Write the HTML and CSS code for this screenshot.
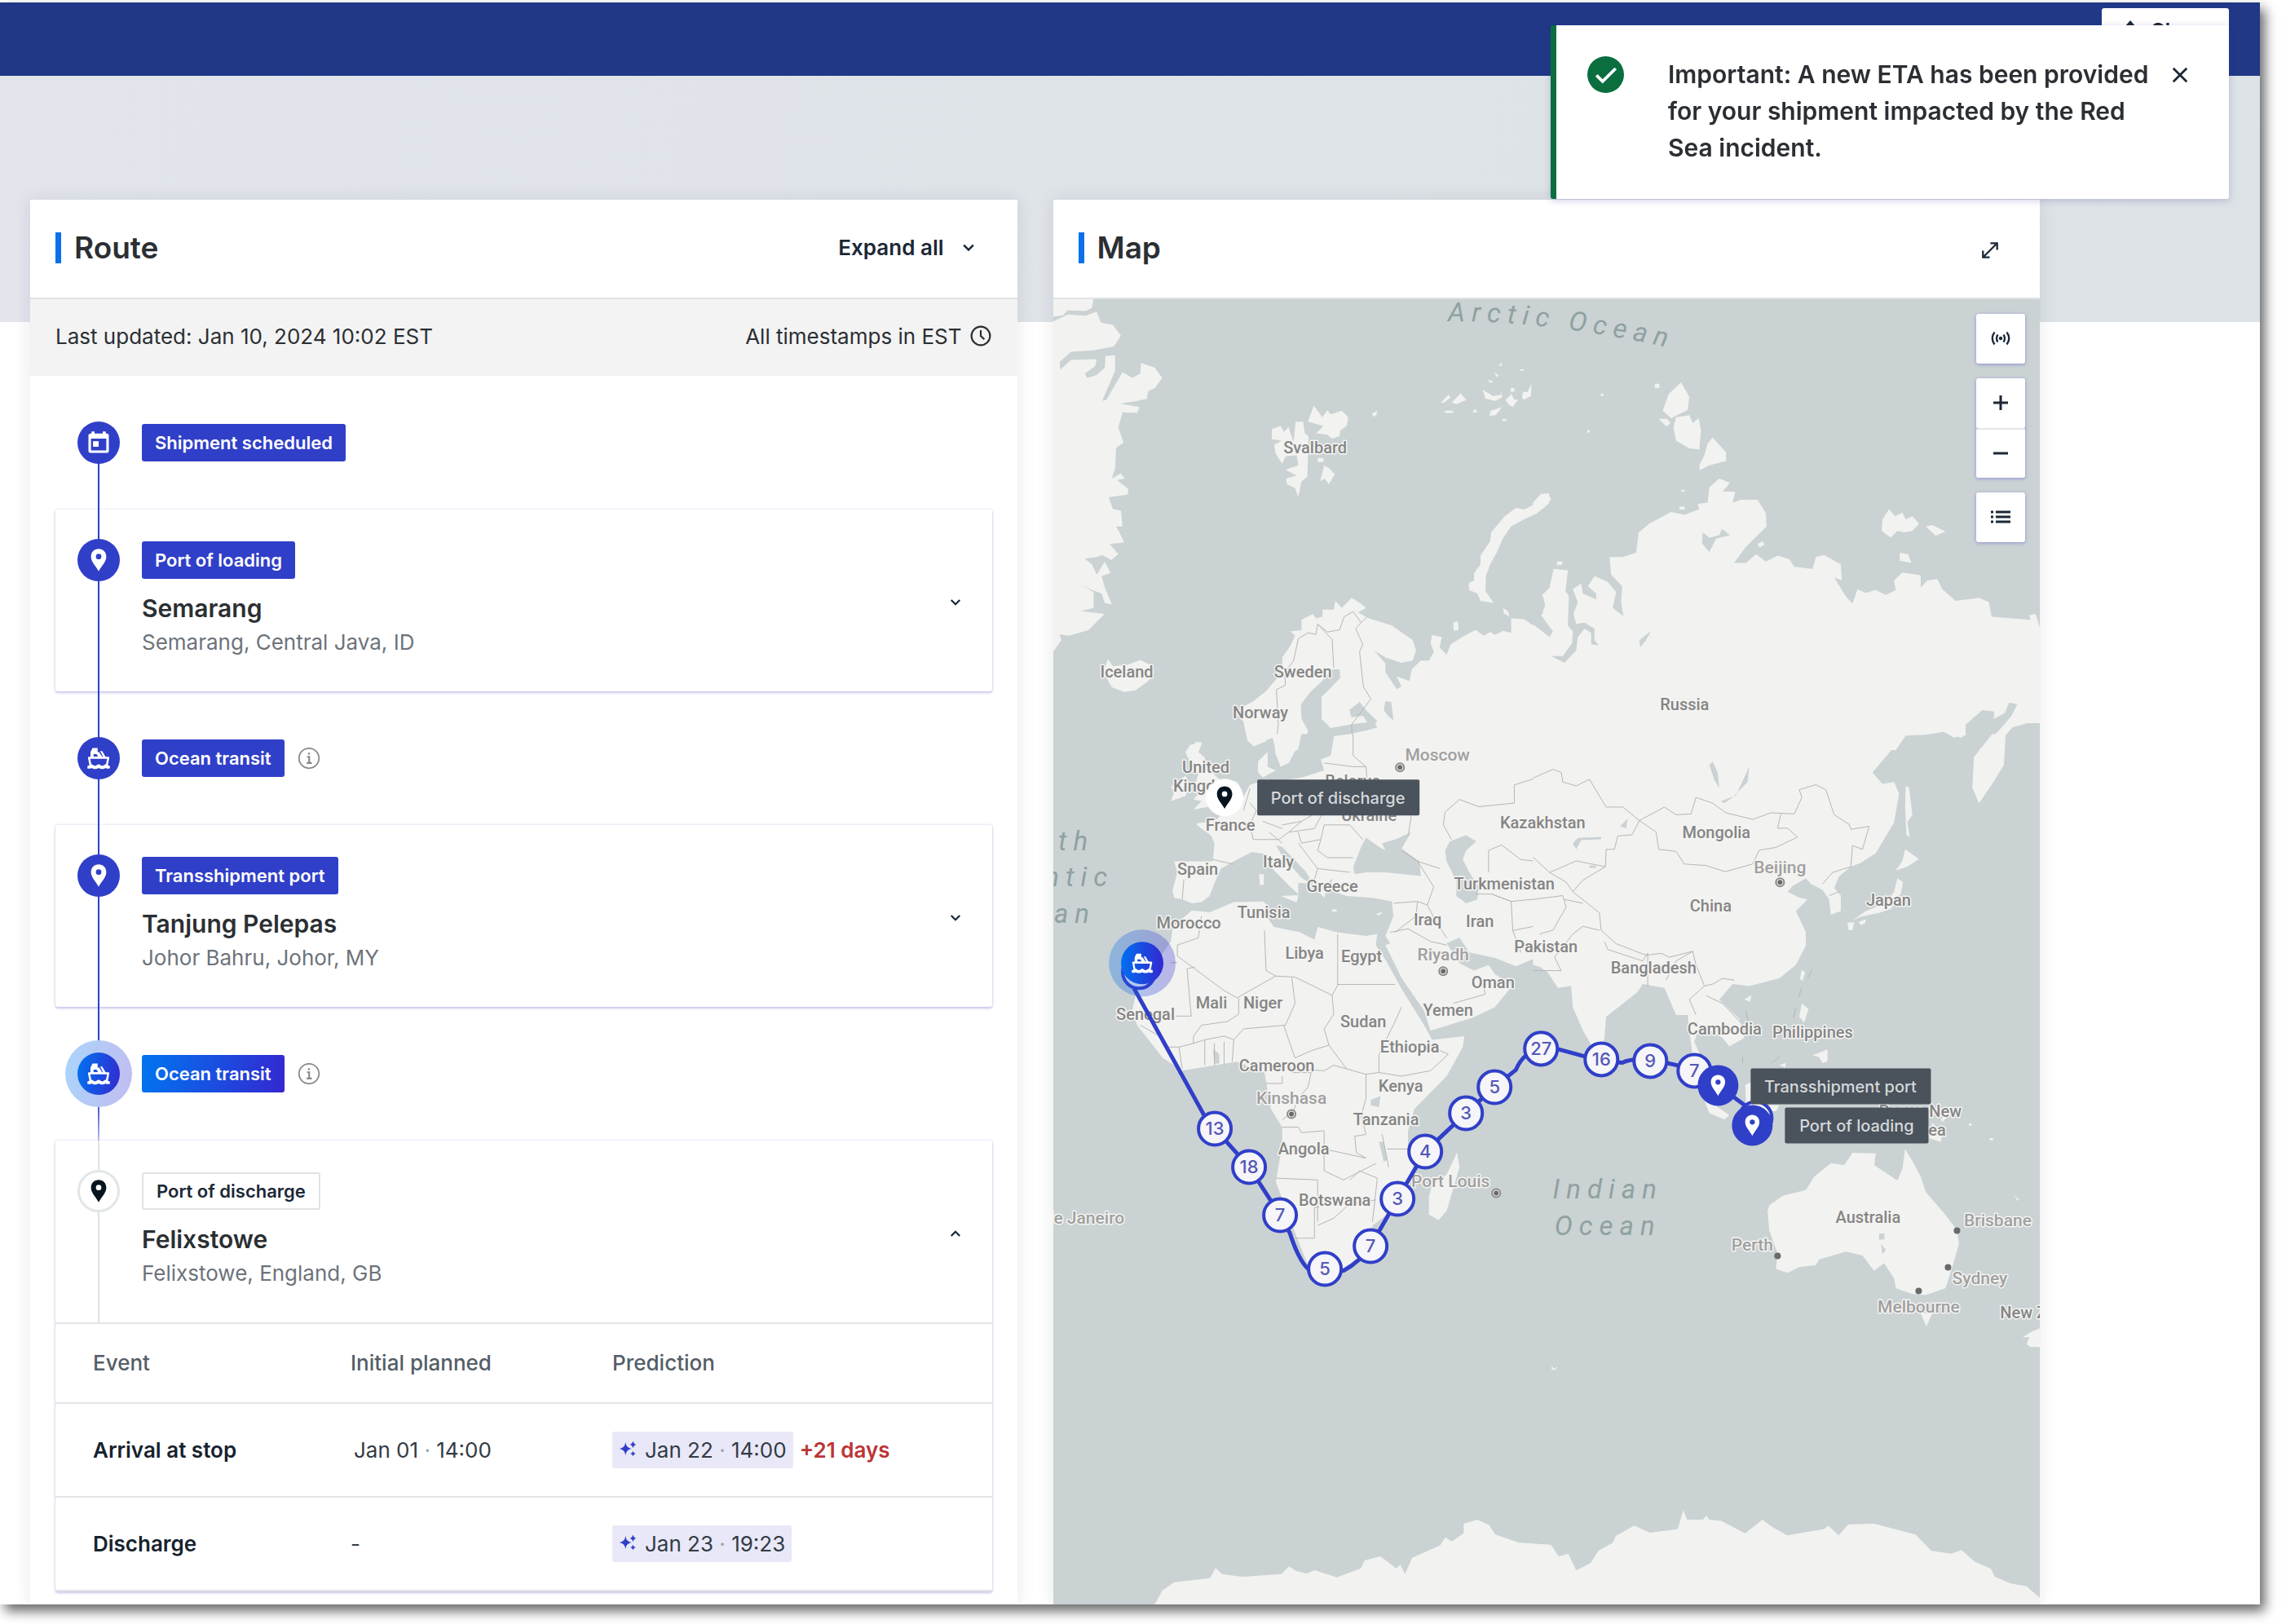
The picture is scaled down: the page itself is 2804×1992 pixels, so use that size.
FILE: index.html
```html
<!DOCTYPE html>
<html lang="en">
<head>
    <meta charset="UTF-8">
    <meta name="viewport" content="width=device-width, initial-scale=1.0">
    <title>Shipment tracking</title>
    <link rel="stylesheet" href="styles.css">
</head>
<body>
    <!-- Shared icons -->
    <svg class="sprite" aria-hidden="true">
        <defs>
            <linearGradient id="active-gradient" x1="0" y1="0" x2="1" y2="0">
                <stop offset="0" stop-color="#0070f0"/>
                <stop offset="1" stop-color="#3428d0"/>
            </linearGradient>
            <symbol id="icon-pin" viewBox="0 0 24 24">
                <path fill="currentColor" fill-rule="evenodd" d="M12 1C7.6 1 4.5 4.300 4.500 8.500c0 5.200 5 9.500 7.500 14.500 2.500-5 7.500-9.300 7.500-14.500C19.500 4.300 16.400 1 12 1zm0 4.800a2.700 2.700 0 1 1 0 5.400 2.700 2.700 0 0 1 0-5.400z"/>
            </symbol>
            <symbol id="icon-ship" viewBox="0 0 24 24">
                <path fill="none" stroke="currentColor" stroke-width="2" stroke-linejoin="round" d="M4 19 2.500 11.500h19L20 19"/>
                <path fill="currentColor" fill-rule="evenodd" d="M4 12V6l2-4h5v4h1.500l3.500 5.500zM7 8v2.500h4.500L10 8zM13.500 5h2l3.500 6h-2.500zM1 19.500c2 0 2.500-1.500 4-1.500s2 1.500 3.500 1.500S10.500 18 12 18s2 1.500 3.500 1.500S17.500 18 19 18s2 1.500 4 1.500V22c-2 .5-3 .3-4-.5-1 .8-2.500 1-3.500 1s-2.500-.2-3.500-1c-1 .8-2.500 1-3.500 1s-2.500-.2-3.500-1c-1 .8-2 1-4 .5z"/>
            </symbol>
            <symbol id="icon-calendar" viewBox="0 0 24 24">
                <path fill="currentColor" fill-rule="evenodd" d="M5 1h3v2h8V1h3v2h1a2 2 0 0 1 2 2v15a2 2 0 0 1-2 2H4a2 2 0 0 1-2-2V5a2 2 0 0 1 2-2h1zM4.500 8v11.500h15V8z"/>
                <path fill="currentColor" d="M6.500 10.500h5.500v5.500H6.500z"/>
            </symbol>
            <symbol id="icon-chevron" viewBox="0 0 24 24">
                <path fill="none" stroke="currentColor" stroke-width="3" d="m5 8 7 7 7-7"/>
            </symbol>
            <symbol id="icon-info" viewBox="0 0 24 24">
                <circle cx="12" cy="12" r="10.500" fill="none" stroke="currentColor" stroke-width="1.500"/>
                <path fill="none" stroke="currentColor" stroke-width="1.800" d="M10 10.500h2.200v6M9.500 17h5.500M11 7.200h2"/>
            </symbol>
            <symbol id="icon-sparkle" viewBox="0 0 24 24">
                <path fill="currentColor" d="M9 3c.8 5.500 2.500 7.500 8 9-5.500 1.500-7.200 3.500-8 9-.8-5.500-2.500-7.500-8-9 5.500-1.500 7.200-3.500 8-9zM19 2l1.500 3L23 6.500 20.500 8 19 11l-1.500-3L15 6.500 17.500 5zM19 15l1.200 2.400L22.500 18.600l-2.300 1.200L19 22.200l-1.200-2.400-2.300-1.200 2.300-1.200z"/>
            </symbol>
        </defs>
    </svg>

    <div class="app">
        <header class="top-bar">
            <button class="share" type="button">
                <svg class="icon-share" viewBox="0 0 24 24" aria-hidden="true"><path fill="currentColor" d="m12 0 7 8H5z"/><path fill="none" stroke="currentColor" stroke-width="3" d="M12 17V6M4 12v9h16v-9"/></svg>
                Share
            </button>
        </header>

        <main>
            <section class="panel route">
                <div class="panel-head">
                    <h2>Route</h2>
                    <button class="expand" type="button">Expand all <svg class="chevron"><use href="#icon-chevron"/></svg></button>
                </div>
                <div class="info-bar">
                    <span>Last updated: Jan 10, 2024 10:02 EST</span>
                    <span class="zone">All timestamps in EST
                        <svg class="clock" viewBox="0 0 24 24" aria-hidden="true"><circle cx="12" cy="12" r="10.500" fill="none" stroke="currentColor" stroke-width="2"/><path fill="none" stroke="currentColor" stroke-width="2" d="M12 5.500V12l4 4"/></svg>
                    </span>
                </div>

                <div class="timeline">
                    <div class="leg first">
                        <div class="rail"><span class="dot"><svg><use href="#icon-calendar"/></svg></span></div>
                        <div class="leg-body"><span class="tag">Shipment scheduled</span></div>
                    </div>

                    <article class="stop">
                        <div class="stop-head">
                            <div class="rail"><span class="dot"><svg><use href="#icon-pin"/></svg></span></div>
                            <div class="stop-body">
                                <span class="tag">Port of loading</span>
                                <h3>Semarang</h3>
                                <p>Semarang, Central Java, ID</p>
                            </div>
                            <button class="toggle" type="button" aria-label="Show Semarang"><svg class="chevron"><use href="#icon-chevron"/></svg></button>
                        </div>
                    </article>

                    <div class="leg">
                        <div class="rail"><span class="dot"><svg><use href="#icon-ship"/></svg></span></div>
                        <div class="leg-body"><span class="tag">Ocean transit</span><svg class="info"><use href="#icon-info"/></svg></div>
                    </div>

                    <article class="stop">
                        <div class="stop-head">
                            <div class="rail"><span class="dot"><svg><use href="#icon-pin"/></svg></span></div>
                            <div class="stop-body">
                                <span class="tag">Transshipment port</span>
                                <h3>Tanjung Pelepas</h3>
                                <p>Johor Bahru, Johor, MY</p>
                            </div>
                            <button class="toggle" type="button" aria-label="Show Tanjung Pelepas"><svg class="chevron"><use href="#icon-chevron"/></svg></button>
                        </div>
                    </article>

                    <div class="leg active">
                        <div class="rail"><span class="halo"><span class="dot"><svg><use href="#icon-ship"/></svg></span></span></div>
                        <div class="leg-body"><span class="tag">Ocean transit</span><svg class="info"><use href="#icon-info"/></svg></div>
                    </div>

                    <article class="stop upcoming">
                        <div class="stop-head">
                            <div class="rail"><span class="dot"><svg><use href="#icon-pin"/></svg></span></div>
                            <div class="stop-body">
                                <span class="tag">Port of discharge</span>
                                <h3>Felixstowe</h3>
                                <p>Felixstowe, England, GB</p>
                            </div>
                            <button class="toggle open" type="button" aria-label="Hide Felixstowe"><svg class="chevron"><use href="#icon-chevron"/></svg></button>
                        </div>
                        <table>
                            <thead>
                                <tr><th>Event</th><th>Initial planned</th><th>Prediction</th></tr>
                            </thead>
                            <tbody>
                                <tr>
                                    <th>Arrival at stop</th>
                                    <td><time>Jan 01 <i>·</i> 14:00</time></td>
                                    <td><span class="prediction"><svg><use href="#icon-sparkle"/></svg>Jan 22 <i>·</i> 14:00</span><strong class="late">+21 days</strong></td>
                                </tr>
                                <tr>
                                    <th>Discharge</th>
                                    <td>-</td>
                                    <td><span class="prediction"><svg><use href="#icon-sparkle"/></svg>Jan 23 <i>·</i> 19:23</span></td>
                                </tr>
                            </tbody>
                        </table>
                    </article>
                </div>
            </section>

            <section class="panel map-panel">
                <div class="panel-head">
                    <h2>Map</h2>
                    <button class="fullscreen" type="button" aria-label="Full screen"><svg viewBox="0 0 24 24"><path fill="none" stroke="currentColor" stroke-width="2.500" d="M3 21 21 3M12.500 2.500h9v9M2.500 12.500v9h9"/></svg></button>
                </div>
                <div class="map">
                    <svg class="world" viewBox="0 0 1210 1601" preserveAspectRatio="xMidYMin slice" role="img" aria-label="Shipment route">
                        <defs>
                            <path id="arctic-curve" d="M484 27Q622 26 800 70"/>
                        </defs>

                        <!-- North Atlantic and Scandinavia -->
                        <svg x="-12" y="-7" width="620" height="560" viewBox="0 0 1568 1568" preserveAspectRatio="none">
                            <g class="land">
                                <path d="M30 0 155 20 150 50 130 60 75 58 60 75 30 80ZM30 95 75 72 130 76 165 62 178 100 215 108 240 145 218 182 155 195 85 200 50 235 52 262 85 228 165 225 160 250 128 275 135 290 165 280 190 255 192 215 222 212 222 265 182 368 195 365 245 270 275 290 300 275 302 238 345 255 368 290 345 325 325 335 320 362 285 370 238 378 298 390 290 410 245 408 232 460 248 512 225 530 222 600 212 635 240 618 252 635 228 640 262 670 262 690 202 700 215 740 240 745 245 800 225 800 240 830 250 855 205 860 232 895 210 915 182 898 165 905 128 910 150 930 165 965 190 920 208 960 180 970 190 1010 212 1068 190 1062 180 1030 150 1018 118 1000 155 1025 155 1080 115 1090 190 1100 140 1155 80 1175 50 1170 55 1190 30 1230Z"/>
                                <path d="M708 465 735 455 745 475 760 458 775 510 782 440 805 440 810 480 822 490 818 630 800 645 790 700 780 668 755 655 752 635 785 625 750 605 790 590 785 555 750 560 740 585 720 550 715 520 738 505 708 500ZM838 385 865 425 880 400 890 415 925 402 945 425 940 455 920 470 918 490 895 498 880 485 845 480 868 455 820 440ZM858 645 870 590 885 600 903 620 885 655 872 635ZM850 565h18v14h-18z"/>
                                <path d="M1018 412l18-10-4 14-8 8zM1232 375l24-28 6 10-20 18zM1265 375l28-32 18 22-30 15zM1245 402h25v8h-25zM1362 330l32 22 24-4 0-15 4 24-22 12-30-8zM1378 295l18 8-12 4zM1398 270l14 12-8 4zM1433 365l18-20 8 18 12 2-16 25-12-8zM1484 360l2-22 15 0 12-28-2 42-20 12zM1382 420l5-18 35-12-20 28zM1330 408l8-12 8 12zM1448 325h12v12h-12zM1412 245l12-8-6 14zM1478 260h12v5h-12zM1422 432h14v6h-14z"/>
                                <path d="M1568 685 1545 690 1530 720 1490 742 1465 736 1430 765 1388 820 1385 850 1355 900 1355 930 1335 960 1335 985 1318 995 1320 1018 1345 1030 1355 1055 1395 1062 1370 1020 1372 970 1385 930 1405 890 1425 840 1450 800 1490 775 1530 755 1568 720ZM1270 1130l15-5 2 30-15 3zM1425 1080l15 10 5 20-18-12z"/>
                                <path d="M200 1255 215 1280 235 1278 260 1275 300 1258 330 1275 342 1300 325 1330 285 1362 250 1368 212 1352 185 1300Z"/>
                                <path d="M650 1552 632 1535 620 1470 600 1440 625 1415 650 1400 690 1365 740 1300 740 1250 765 1210 780 1175 765 1160 800 1155 800 1120 835 1100 845 1115 865 1110 865 1085 900 1085 905 1055 925 1080 955 1045 985 1065 1000 1080 975 1095 1010 1115 1080 1140 1145 1190 1155 1225 1145 1260 1110 1268 1060 1250 1025 1225 1060 1270 1060 1300 1095 1358 1110 1350 1095 1315 1135 1330 1142 1290 1170 1260 1195 1260 1210 1230 1200 1200 1205 1172 1235 1180 1228 1215 1250 1240 1262 1205 1305 1175 1340 1155 1365 1175 1385 1162 1400 1172 1425 1158 1450 1165 1450 1115 1490 1118 1550 1165 1568 1185V1568H720L710 1525ZM1568 1015 1545 1035 1560 1060 1548 1090 1568 1115ZM465 1568l5-28 20 0-8 28z"/>
                            </g>
                            <g class="sea">
                                <path d="M895 1290 918 1290 920 1320 885 1360 862 1385 862 1460 890 1492 960 1478 1025 1470 1035 1490 1000 1500 950 1512 900 1520 905 1568 805 1568 820 1500 800 1460 798 1410 830 1365 860 1335ZM948 1430 980 1402 1000 1430 1035 1468 1015 1490 990 1450 955 1455ZM1060 1400 1078 1402 1085 1465 1068 1450 1055 1430ZM1100 1520 1125 1545 1125 1568 1105 1568ZM728 1525 755 1510 750 1530 730 1550Z"/>
                            </g>
                            <path class="border" d="M718 1568 728 1480 722 1360 750 1345 748 1300 775 1262 790 1185 820 1165 845 1170 850 1135 880 1162 918 1155 932 1110 960 1092 985 1130 1005 1108M850 1135 895 1188 900 1285M985 1130 968 1150 990 1205 980 1230 992 1350 1015 1392 955 1480 960 1560"/>
                        </svg>

                        <!-- Siberia -->
                        <svg x="588" y="-7" width="640" height="560" viewBox="0 0 1568 1568" preserveAspectRatio="none">
                            <g class="land">
                                <path d="M0 718 25 688 45 688 55 705 35 735 0 760ZM445 305 470 355 465 400 415 428 390 402 408 345ZM378 430l25 0 10 15-12 12zM422 460 430 425 470 418 480 445 498 428 505 470 500 535 470 532 430 505ZM540 495 580 545 580 575 530 590 502 607 500 590 515 555 525 515ZM366 310h14v14h-14zM204 344h8v8h-8zM163 469h8v8h-8zM440 732h16v10h-16zM446 674h10v6h-10zM72 920h16v12h-16z"/>
                                <path d="M0 1135 50 1180 60 1160 25 1105 38 1080 30 1035 50 1010 62 945 105 950 98 1020 108 1040 105 1140 120 1160 118 1200 90 1245 55 1245 95 1268 130 1225 135 1180 155 1150 175 1165 175 1205 198 1208 185 1190 185 1150 155 1130 130 1135 122 1100 135 1060 120 1015 145 995 150 1030 190 1050 190 1030 165 1005 185 970 225 990 250 1025 240 1080 272 1108 265 1060 268 1005 235 965 230 905 270 905 310 890 318 820 350 790 415 750 455 760 500 740 495 722 525 718 530 665 560 635 592 650 570 680 608 680 600 718 625 708 675 708 700 755 702 800 640 870 585 955 605 925 640 925 670 895 700 920 735 900 770 912 785 938 840 945 850 905 875 898 925 930 928 985 905 975 940 1040 960 1065 975 1015 1000 1028 1030 1018 1060 1035 1090 1018 1085 985 1110 958 1165 968 1165 1010 1185 985 1215 980 1230 1015 1270 1055 1340 1045 1370 1060 1378 1110 1440 1115 1495 1120 1490 1105 1510 1100 1525 1155 1568 1160V1475H1485L1440 1490 1410 1530 1405 1568H1340L1400 1500 1438 1450 1455 1410 1430 1405 1418 1440 1385 1460 1385 1435 1350 1430 1300 1480 1300 1515 1265 1525 1235 1505 1180 1515 1120 1518 1090 1568H0Z"/>
                                <path d="M1070 740 1088 765 1110 752 1120 775 1140 765 1160 790 1140 815 1115 820 1095 815 1075 838 1048 815 1050 775ZM1180 800l20-5 40 22-30 15zM1102 890l25 5 10 30-35-8zM675 860l15-10 6 12-15 10z"/>
                            </g>
                            <g class="sea">
                                <path d="M510 820 530 838 560 830 568 808 592 830 550 842 530 888 508 858ZM320 1190 355 1158 340 1190 322 1215Z"/>
                            </g>
                        </svg>

                        <!-- Europe, Africa and the Middle East -->
                        <svg x="-12" y="533" width="620" height="700" viewBox="0 0 1568 1568" preserveAspectRatio="none">
                            <g class="land">
                                <path d="M455 30 492 25 480 50 500 65 500 90 540 120 575 150 570 185 545 195 465 208 490 185 465 180 485 160 470 140 480 110 455 80 440 50ZM395 145 440 115 455 140 440 170 395 185 405 160ZM630 0H690L690 20 650 35ZM715 0H795L785 40 760 80 735 90 718 50ZM665 75 695 50 695 90 720 100 680 120 665 105Z"/>
                                <path d="M475 245 530 240 560 215 600 205 640 140 690 125 720 130 800 120 870 100 860 70 890 60 900 10 960 0H1568V640L1540 610 1465 638 1400 615 1320 600 1290 560 1250 575 1290 630 1335 650 1380 635 1400 660 1455 690 1400 750 1330 780 1200 815 1180 760 1110 670 1060 580 1075 575 1060 555 1085 500 1080 460 1020 450 940 445 890 430 895 395 1000 380 1060 380 1170 390 1165 350 1110 315 1140 270 1090 290 1050 300 1060 320 1040 310 1000 285 985 310 960 365 965 385 920 395 890 400 870 450 840 420 815 380 740 310 720 305 740 335 800 395 825 410 790 410 790 440 765 420 715 375 690 330 645 325 600 345 550 370 530 410 515 445 490 462 460 465 432 455 405 450 400 430 415 380 405 350 525 350 530 300 520 280 475 250Z"/>
                                <path d="M735 445 790 443 785 463ZM668 385H683V415H671ZM895 482h14v6h-14zM1030 495l24-8-14 12z"/>
                                <path d="M460 485 515 490 590 462 680 460 695 470 690 500 715 530 795 545 840 565 850 530 910 545 1000 555 1035 550 1030 580 1060 620 1110 700 1180 800 1205 840 1305 830 1300 860 1250 940 1150 1030 1130 1090 1130 1140 1150 1200 1130 1250 1080 1310 1020 1350 1000 1420 930 1475 850 1480 820 1460 780 1370 720 1230 740 1130 740 1080 705 1030 685 930 600 900 500 915 430 925 370 890 290 800 275 760 290 700 340 640 395 570 400 530 440 500ZM1282 1150 1290 1190 1250 1310 1225 1335 1195 1320 1195 1270 1205 1240 1250 1210Z"/>
                            </g>
                            <g class="sea">
                                <path d="M1245 320 1260 295 1310 278 1342 295 1310 320 1300 345 1320 380 1350 420 1345 455 1310 465 1280 445 1280 405 1250 350ZM1015 1005 1045 995 1040 1025 1015 1020ZM1040 1120 1055 1120 1065 1170 1055 1175ZM525 865 545 880 545 905 530 905ZM800 0H895L880 40 830 100 790 110 780 80ZM812 45h10v10h-10z"/>
                            </g>
                            <path class="border" d="M685 540 690 650 720 665 780 668 895 718 912 690V550M912 688H1090M720 665 600 725 560 705 415 610V580L480 560 490 500M395 628H415M445 645 458 775H410M605 725V770L570 790 490 800 465 830 465 850M445 645 470 640M770 670 780 740 750 800 620 810 590 840 585 900M895 718 900 770 870 810 885 855 830 870 780 890 760 840 745 800M885 855 940 920 1000 935 1040 930 1040 880 1090 790 1110 750M1040 930 1110 940 1200 925 1255 880 1180 850M1000 935 1000 1000 985 1050 1000 1100 965 1105 970 1150 1000 1165 870 1140M740 1080H790L800 1095 870 1090V1200L930 1225 1030 1180M720 1220 850 1225V1340M780 1385H840V1300L855 1300M850 1350 900 1330 950 1290 1030 1280M950 1225 980 1200 1035 1220 1020 1340M690 960H740V940M770 930 830 930 820 970 790 1000 775 1035 740 1060M780 920 870 925 900 910 940 920M500 840V910M530 850V910M560 845V910M465 850 500 840 560 830 590 840M300 800 360 830 380 860 420 860 430 920M420 860 465 850M1050 1100 1070 1190M1065 1140H1130"/>
                            <path class="border" d="M1085 465 1160 460 1190 470 1220 520 1250 560M1075 545 1130 535 1200 570 1250 580M1160 460 1155 500 1090 545M1270 740 1370 715 1360 680M1190 470 1210 420 1160 350 1230 370M1390 440 1450 460 1455 540 1480 600M1450 460 1568 450M1380 380V320L1420 305 1480 345 1530 350 1568 380M1340 440 1390 440 1450 460M1568 110 1460 140 1460 190 1350 200 1290 180 1245 215 1240 250 1265 290M1455 540 1568 520"/>
                            <path class="border" d="M960 0V60L1000 90 1005 150 870 150M870 80 960 90 1000 90M860 150 860 210 800 240 760 270 730 290 650 290 640 250 660 210M760 270 840 260 870 210 870 150M870 250 950 250 990 290M860 290 850 320 880 340 960 340M790 300 850 370 840 400M790 270 800 300 860 290 870 250M740 250 800 240M680 240 740 260M850 370 950 380M1005 150 1120 170 1140 230 1130 280M525 345 590 358M435 400 430 455M660 210 640 190M1160 350 1110 320M640 150 620 210M700 270 740 300"/>
                        </svg>

                        <!-- East Asia and Australia -->
                        <svg x="588" y="533" width="640" height="740" viewBox="0 0 1568 1568" preserveAspectRatio="none">
                            <g class="land">
                                <path d="M0 0H1115L1060 60 1020 100 1050 130 1085 125 1100 155 1085 230 1030 310 985 335 955 345 920 370 905 400 925 420 925 460 895 470 890 430 870 405 835 390 820 375 780 395 765 410 800 425 825 430 790 460 820 515 820 550 790 600 740 635 650 655 600 650 560 690 620 740 635 790 590 812 570 790 530 770 500 760 485 800 510 850 535 900 520 900 480 840 470 770 465 730 430 730 395 660 330 650 315 670 220 735 215 790 205 820 180 815 150 770 120 710 115 655 75 660 45 620 20 605 0 600Z"/>
                                <path d="M1380 0H1420L1415 80 1380 130 1340 180 1320 140 1325 60ZM1265 0h40l-20 10zM1120 135 1130 140 1140 210 1125 230 1132 268 1122 262 1118 190ZM1118 300 1160 325 1125 345 1090 355 1110 330ZM1095 375 1112 385 1105 415 1075 455 1040 465 985 475 960 485 1000 460 1060 440 1085 410ZM945 490l20 0-5 20-12 0zM980 488l20-6-2 10-14 4zM808 612l10 8-8 22-8-6zM635 690l22-12-5 18zM808 700 828 715 815 750 800 735ZM840 835 885 820 885 850 870 855 860 840ZM740 860l20-5-2 12zM500 920 540 960 590 990 575 1002 530 985ZM638 912 655 905V960H640ZM700 965h40l-10 15h-25zM1200 1010 1230 1040 1225 1060 1190 1050ZM1225 1000l25-10-20 18zM1310 1012h8v6h-8zM1372 1050h10v6h-10zM1445 1198l15 12-4 3zM1465 1212l8 4z"/>
                                <path d="M710 1225 750 1200 820 1185 845 1150 895 1115 935 1120 960 1088 1030 1090 1025 1120 1095 1160 1110 1130 1118 1078 1140 1110 1165 1150 1180 1190 1235 1245 1275 1290 1280 1325 1265 1370 1240 1440 1180 1458 1140 1455 1090 1440 1085 1415 1055 1375 1025 1395 990 1355 940 1345 860 1365 850 1380 800 1385 765 1400 730 1390 735 1350 710 1290 705 1240ZM1165 1505H1200L1182 1540ZM1470 1568 1500 1552 1568 1530V1568Z"/>
                            </g>
                            <g class="sea">
                                <path d="M565 175 610 160 650 85 645 125 600 165 575 180ZM120 285 135 270 205 268 205 274 145 276 130 300ZM515 95 540 72 555 100 560 140 545 120 530 80ZM262 240 285 220 280 245ZM1040 1298h16v16h-16zM1046 1325 1060 1340 1050 1352ZM170 342h20v6h-20z"/>
                            </g>
                            <path class="border" d="M0 115 60 92 85 100 90 125 130 135 170 118 220 190 270 190 320 225 395 190 430 210 475 208 490 165 540 180 580 205 660 222 715 205 785 208 808 165 800 145 850 132 880 145 905 210 950 235 955 248 1010 240 990 300 960 290 955 345 900 360 870 390M320 225 370 255 378 300 430 305 455 338 520 342 578 358 660 338 680 302 730 295 795 268 765 245 735 245 745 208M320 225 298 262 255 265 245 300 220 300 218 345 150 380 120 410 200 465 205 510 250 545 340 575 385 570 410 580 480 565 490 600 515 655 540 650 570 635 605 640M0 320 50 360 130 330 218 345M0 430 90 420 100 450 60 510 20 520M50 360 100 385 120 410M215 540 225 560 330 590 345 570M345 570V655M400 640 430 590 480 565M515 655 470 690 490 730M520 680 570 700 625 750M0 615 85 615 65 580 120 520 150 500 200 510M95 430 150 440M890 420 920 410"/>
                            <path class="border dashed" d="M840 612 805 665 780 745M740 838 700 870M640 720 655 790M630 840V855"/>
                        </svg>

                        <!-- Antarctica -->
                        <svg x="-12" y="1213" width="1524" height="412" viewBox="0 0 1568 1236" preserveAspectRatio="none">
                            <path class="land" d="M140 1163 150 1110 165 1080 210 1065 217 1028 225 1050 250 1060 300 1050 310 1022 318 1038 332 1048 342 1036 370 1062 400 1030 405 1000 425 985 445 1030 450 1015 456 1050 465 990 500 945 507 915 515 930 530 900 530 865 547 850 562 870 570 905 600 935 640 942 650 985 662 975 672 1037 690 1010 700 965 718 935 722 910 745 872 765 898 800 885 807 815 812 850 832 850 836 835 840 850 855 855 885 900 907 850 918 875 938 908 985 885 990 872 1003 908 1015 868 1048 865 1100 905 1120 965 1145 975 1158 962 1175 1005 1195 1030 1200 1060 1220 1085 1240 1095 1258 1140 1300 1163V1236H140ZM1240 205Q1245 160 1258 145L1300 120V215H1245ZM641 285l3 10 4-8-2 12-5 0z"/>
                        </svg>

                        <g class="ocean-names">
                            <text><textPath href="#arctic-curve">Arctic Ocean</textPath></text>
                            <text x="680" y="1103" text-anchor="middle">Indian</text>
                            <text x="680" y="1148" text-anchor="middle">Ocean</text>
                            <text x="50" y="676" text-anchor="end">North</text>
                            <text x="74" y="720" text-anchor="end">Atlantic</text>
                            <text x="52" y="765" text-anchor="end">Ocean</text>
                        </g>

                        <g class="countries">
                            <text x="321" y="189">Svalbard</text>
                            <text x="90" y="464">Iceland</text>
                            <text x="306" y="464">Sweden</text>
                            <text x="254" y="514">Norway</text>
                            <text x="774" y="504">Russia</text>
                            <text x="187" y="581">United</text>
                            <text x="187" y="604">Kingdom</text>
                            <text x="217" y="652">France</text>
                            <text x="177" y="706">Spain</text>
                            <text x="276" y="697">Italy</text>
                            <text x="342" y="727">Greece</text>
                            <text x="258" y="759">Tunisia</text>
                            <text x="166" y="772">Morocco</text>
                            <text x="459" y="768">Iraq</text>
                            <text x="523" y="770">Iran</text>
                            <text x="553" y="724">Turkmenistan</text>
                            <text x="600" y="649">Kazakhstan</text>
                            <text x="367" y="598">Belarus</text>
                            <text x="387" y="640">Ukraine</text>
                            <text x="813" y="661">Mongolia</text>
                            <text x="806" y="751">China</text>
                            <text x="1024" y="744">Japan</text>
                            <text x="604" y="801">Pakistan</text>
                            <text x="736" y="827">Bangladesh</text>
                            <text x="539" y="845">Oman</text>
                            <text x="484" y="879">Yemen</text>
                            <text x="378" y="813">Egypt</text>
                            <text x="308" y="809">Libya</text>
                            <text x="194" y="870">Mali</text>
                            <text x="257" y="870">Niger</text>
                            <text x="380" y="893">Sudan</text>
                            <text x="113" y="884">Senegal</text>
                            <text x="437" y="924">Ethiopia</text>
                            <text x="274" y="947">Cameroon</text>
                            <text x="426" y="972">Kenya</text>
                            <text x="408" y="1013">Tanzania</text>
                            <text x="307" y="1049">Angola</text>
                            <text x="345" y="1112">Botswana</text>
                            <text x="823" y="902">Cambodia</text>
                            <text x="931" y="906">Philippines</text>
                            <text x="1063" y="1003">Papua New</text>
                            <text x="1063" y="1026">Guinea</text>
                            <text x="999" y="1133">Australia</text>
                            <text x="1219" y="1249">New Zealand</text>
                        </g>
                        <g class="cities">
                            <text x="471" y="566">Moscow</text>
                            <text x="891" y="704">Beijing</text>
                            <text x="478" y="811">Riyadh</text>
                            <text x="292" y="987">Kinshasa</text>
                            <text x="487" y="1089">Port Louis</text>
                            <text x="20" y="1134">Rio de Janeiro</text>
                            <text x="1158" y="1137">Brisbane</text>
                            <text x="857" y="1167">Perth</text>
                            <text x="1136" y="1208">Sydney</text>
                            <text x="1061" y="1242">Melbourne</text>
                        </g>
                        <g class="capital">
                            <circle cx="425" cy="574" r="5"/>
                            <circle cx="891" cy="715" r="5"/>
                            <circle cx="478" cy="824" r="5"/>
                            <circle cx="292" cy="999" r="5"/>
                            <circle cx="543" cy="1096" r="5"/>
                        </g>
                        <g class="capital-core">
                            <circle cx="425" cy="574" r="3"/>
                            <circle cx="891" cy="715" r="3"/>
                            <circle cx="478" cy="824" r="3"/>
                            <circle cx="292" cy="999" r="3"/>
                            <circle cx="543" cy="1096" r="3"/>
                            <circle cx="1108" cy="1142" r="4"/>
                            <circle cx="888" cy="1173" r="4"/>
                            <circle cx="1097" cy="1187" r="4"/>
                            <circle cx="1061" cy="1216" r="4"/>
                        </g>

                        <!-- Vessel track -->
                        <path class="track" d="M99 845 184 999 198 1017 240 1064 278 1123 290 1145Q302 1182 315 1191L333 1194 356 1191Q376 1180 389 1161L422 1103 456 1045 506 998 541 966 567 945Q577 922 598 919L617 919 672 934 698 936Q706 931 732 932L786 944 815 964 861 998"/>
                        <g class="clusters">
                            <circle cx="105" cy="825" r="20"/>
                            <circle cx="861" cy="1004" r="20"/>
                            <circle cx="198" cy="1017" r="20"/><text x="198" y="1025">13</text>
                            <circle cx="240" cy="1064" r="20"/><text x="240" y="1072">18</text>
                            <circle cx="278" cy="1123" r="20"/><text x="278" y="1131">7</text>
                            <circle cx="333" cy="1189" r="20"/><text x="333" y="1197">5</text>
                            <circle cx="389" cy="1161" r="20"/><text x="389" y="1169">7</text>
                            <circle cx="422" cy="1103" r="20"/><text x="422" y="1111">3</text>
                            <circle cx="456" cy="1045" r="20"/><text x="456" y="1053">4</text>
                            <circle cx="506" cy="998" r="20"/><text x="506" y="1006">3</text>
                            <circle cx="541" cy="966" r="20"/><text x="541" y="974">5</text>
                            <circle cx="598" cy="919" r="20"/><text x="598" y="927">27</text>
                            <circle cx="672" cy="932" r="20"/><text x="672" y="940">16</text>
                            <circle cx="732" cy="934" r="20"/><text x="732" y="942">9</text>
                            <circle cx="786" cy="946" r="20"/><text x="786" y="954">7</text>
                        </g>

                        <!-- Markers -->
                        <g class="marker">
                            <circle cx="109" cy="814" r="41" fill="url(#active-gradient)" opacity="0.3"/>
                            <circle cx="109" cy="814" r="26" fill="url(#active-gradient)"/>
                            <use href="#icon-ship" x="95" y="800" width="28" height="28"/>
                            <circle cx="815" cy="964" r="25" fill="#303fc8"/>
                            <use href="#icon-pin" x="801" y="950" width="28" height="28"/>
                            <circle cx="857" cy="1013" r="25" fill="#303fc8"/>
                            <use href="#icon-pin" x="843" y="999" width="28" height="28"/>
                        </g>
                        <g class="marker dark">
                            <circle cx="210" cy="611" r="23" fill="#fff"/>
                            <use href="#icon-pin" x="195" y="596" width="30" height="30"/>
                        </g>
                        <g class="marker-label">
                            <rect x="250" y="589" width="199" height="44" rx="2"/>
                            <text x="349" y="619">Port of discharge</text>
                            <rect x="855" y="943" width="221" height="44" rx="2"/>
                            <text x="965" y="973">Transshipment port</text>
                            <rect x="897" y="991" width="176" height="44" rx="2"/>
                            <text x="985" y="1021">Port of loading</text>
                        </g>
                    </svg>

                    <div class="map-tools">
                        <button type="button" aria-label="Live position"><svg viewBox="0 0 24 24"><circle cx="12" cy="12" r="2.200" fill="currentColor"/><path fill="none" stroke="currentColor" stroke-width="2.300" d="M8.500 7.500q-3 4.500 0 9M15.500 7.500q3 4.500 0 9M4.500 4.500q-5.500 7.500 0 15M19.500 4.500q5.500 7.500 0 15"/></svg></button>
                        <div class="zoom">
                            <button type="button" aria-label="Zoom in"><svg viewBox="0 0 24 24"><path fill="none" stroke="currentColor" stroke-width="3" d="M12 3v18M3 12h18"/></svg></button>
                            <button type="button" aria-label="Zoom out"><svg viewBox="0 0 24 24"><path fill="none" stroke="currentColor" stroke-width="3" d="M3 12h18"/></svg></button>
                        </div>
                        <button type="button" aria-label="Legend"><svg viewBox="0 0 24 24"><path fill="none" stroke="currentColor" stroke-width="3" d="M6 6h18M6 12h18M6 18h18M0 6h3M0 12h3M0 18h3"/></svg></button>
                    </div>
                </div>
            </section>
        </main>
    </div>

    <div class="toast" role="status">
        <svg class="check" viewBox="0 0 24 24" aria-hidden="true"><circle cx="12" cy="12" r="12" fill="#0a6e3f"/><path fill="none" stroke="#fff" stroke-width="2" d="m6 12.500 4 4L18.500 8"/></svg>
        <p>Important: A new ETA has been provided for your shipment impacted by the Red Sea incident.</p>
        <button type="button" aria-label="Close"><svg viewBox="0 0 24 24"><path fill="none" stroke="currentColor" stroke-width="3" d="m3 3 18 18M21 3 3 21"/></svg></button>
    </div>
</body>
</html>
```
FILE: styles.css
```css
* {
    box-sizing: border-box;
}

body {
    margin: 0;
    height: 100vh;
    padding: 3px 32px 24px 0;
    overflow: hidden;
    background-color: #fff;
    font-family: Inter, "Liberation Sans", sans-serif;
    font-size: 26px;
    color: #2b2f33;
}

h2, h3, p {
    margin: 0;
}

button {
    padding: 0;
    border: 0;
    background: none;
    font: inherit;
    color: #1b2836;
    cursor: pointer;
}

.sprite {
    position: absolute;
    width: 0;
    height: 0;
}

.app {
    display: flex;
    flex-direction: column;
    height: 100%;
    background-color: #fff;
    box-shadow: 6px 8px 14px rgba(0, 0, 0, 0.6);
}

/* Top bar */
.top-bar {
    display: flex;
    justify-content: flex-end;
    flex: none;
    height: 90px;
    padding: 7px 38px 0 0;
    background-color: #203885;
}

.share {
    display: flex;
    align-items: center;
    justify-content: center;
    gap: 14px;
    width: 156px;
    height: 54px;
    border-radius: 3px;
    background-color: #fff;
    font-weight: 600;
}

.icon-share {
    width: 24px;
    height: 24px;
}

/* Main area */
main {
    display: grid;
    grid-template-columns: 1fr 1fr;
    gap: 44px;
    flex: 1;
    min-height: 0;
    padding: 152px 270px 0 37px;
    overflow: hidden;
    background: linear-gradient(100deg, #e2e5ec, #dce2e5) top / 100% 302px no-repeat;
}

.panel {
    display: flex;
    flex-direction: column;
    min-height: 0;
    background-color: #fff;
    box-shadow: 0 0 20px rgba(30, 30, 60, 0.1);
}

.panel-head {
    display: flex;
    align-items: center;
    justify-content: space-between;
    flex: none;
    height: 122px;
    padding: 0 50px 3px 31px;
    border-bottom: 2px solid #dfe3e3;
}

.panel-head h2 {
    padding-left: 16px;
    border-left: 7px solid #0a70eb;
    font-size: 37px;
    line-height: 38px;
    font-weight: 600;
}

.chevron {
    width: 20px;
    height: 20px;
}

.expand {
    display: flex;
    align-items: center;
    gap: 20px;
    font-weight: 600;
}

.info-bar {
    display: flex;
    align-items: center;
    justify-content: space-between;
    flex: none;
    height: 94px;
    padding: 0 32px 4px 31px;
    background-color: #f3f3f3;
}

.zone {
    display: flex;
    align-items: center;
    gap: 10px;
}

.clock {
    width: 26px;
    height: 26px;
}

/* Timeline */
.timeline {
    flex: 1;
    min-height: 0;
    padding: 0 31px;
}

.rail {
    display: flex;
    justify-content: center;
    background: linear-gradient(#303fc8, #303fc8) center / 2px 100% no-repeat;
}

.dot {
    display: flex;
    align-items: center;
    justify-content: center;
    width: 52px;
    height: 52px;
    border-radius: 50%;
    background-color: #303fc8;
    color: #fff;
}

.dot svg {
    width: 30px;
    height: 30px;
}

.leg {
    display: grid;
    grid-template-columns: 106px 1fr;
    height: 164px;
}

.leg .rail,
.leg-body {
    display: flex;
    align-items: center;
}

.leg-body {
    gap: 16px;
}

.leg.first .rail {
    background-size: 2px 50%;
    background-position: bottom;
}

.tag {
    display: inline-block;
    padding: 0 16px;
    border-radius: 3px;
    background-color: #303fc8;
    color: #fff;
    font-size: 22px;
    line-height: 46px;
    font-weight: 600;
}

.info {
    width: 28px;
    height: 28px;
    color: #85898c;
}

.leg.active .rail {
    background-image: linear-gradient(#303fc8 70%, #b9bfe8);
}

.leg.active .tag,
.leg.active .dot {
    background: linear-gradient(100deg, #0075f0, #3428d0);
}

.halo {
    padding: 15px;
    border-radius: 50%;
    background: linear-gradient(100deg, #aad5fa, #c2bcf1);
}

.stop {
    border-radius: 3px;
    box-shadow: 0 0 3px #d0cfea, 0 2px 3px #c9c6ea;
}

.stop-head {
    display: grid;
    grid-template-columns: 106px 1fr 90px;
    height: 223px;
}

.stop .rail {
    padding-top: 36px;
}

.stop-body {
    padding-top: 39px;
}

.stop h3 {
    padding-top: 14px;
    font-size: 30px;
    line-height: 44px;
    font-weight: 600;
}

.stop p {
    line-height: 40px;
    color: #6c737b;
}

.toggle {
    padding-top: 3px;
}

.toggle .chevron {
    width: 18px;
    height: 18px;
}

.toggle.open .chevron {
    transform: rotate(180deg);
}

.upcoming .rail {
    background-image: linear-gradient(#dfe3e3, #dfe3e3);
}

.upcoming .dot {
    border: 3px solid #e2e6e6;
    background-color: #fff;
    color: #06141f;
}

.upcoming .tag {
    border: 2px solid #dfe3e3;
    background-color: #fff;
    color: #1b2836;
    line-height: 42px;
}

/* Events table */
table {
    width: 100%;
    margin-bottom: 60px;
    border-collapse: collapse;
    table-layout: fixed;
}

th, td {
    height: 115px;
    padding: 0;
    border-top: 2px solid #e2e5e8;
    text-align: left;
    font-weight: 600;
    color: #16222e;
}

tbody tr:last-child {
    border-bottom: 2px solid #e2e5e8;
}

thead th {
    height: 98px;
    padding-bottom: 2px;
    font-weight: 500;
    color: #555d66;
}

th:first-child {
    width: 362px;
    padding-left: 46px;
}

th:nth-child(2) {
    width: 321px;
}

td {
    font-weight: 400;
    color: #333b44;
}

time {
    padding: 0 4px;
}

td i {
    font-style: normal;
    color: #9aa0a8;
}

.prediction {
    display: inline-block;
    padding: 0 8px;
    border-radius: 3px;
    background-color: #e8e8f8;
    line-height: 45px;
}

.prediction svg {
    width: 22px;
    height: 22px;
    margin-right: 10px;
    color: #303fc8;
}

.late {
    padding-left: 8px;
    font-weight: 600;
    color: #bb3535;
}

/* Map */
.fullscreen,
.fullscreen svg {
    width: 22px;
    height: 22px;
}

.map {
    position: relative;
    flex: 1;
    min-height: 0;
    overflow: hidden;
    background-color: #cad2d3;
}

.world {
    display: block;
    width: 100%;
    height: 100%;
    font-family: Roboto, "Liberation Sans", sans-serif;
    font-size: 20px;
    font-weight: 500;
}

.land {
    fill: #f2f2f0;
}

.sea {
    fill: #cad2d3;
}

.border {
    fill: none;
    stroke: #b6b6b4;
    stroke-width: 1px;
    vector-effect: non-scaling-stroke;
}

.dashed {
    stroke-dasharray: 12 14;
}

.ocean-names {
    fill: #8fa1a0;
    font-size: 33px;
    font-style: italic;
    font-weight: 400;
    letter-spacing: 8px;
}

.countries,
.cities {
    fill: #858585;
    stroke: #f4f4f2;
    stroke-width: 3px;
    stroke-linejoin: round;
    paint-order: stroke;
    text-anchor: middle;
}

.cities {
    fill: #a0a0a0;
    font-size: 21px;
}

.capital {
    fill: #f4f4f2;
    stroke: #8a8a8a;
    stroke-width: 2px;
}

.capital-core {
    fill: #6a6a6a;
}

.track {
    fill: none;
    stroke: #303fc8;
    stroke-width: 5px;
    stroke-linejoin: round;
}

.clusters {
    font-family: Inter, sans-serif;
    font-size: 22px;
    text-anchor: middle;
}

.clusters circle {
    fill: #f5f5fa;
    stroke: #303fc8;
    stroke-width: 4px;
}

.clusters text {
    fill: #5458b4;
}

.marker {
    color: #fff;
}

.dark {
    color: #06141f;
}

.marker-label {
    fill: #4a525b;
    font-family: Inter, sans-serif;
    text-anchor: middle;
}

.marker-label text {
    fill: #d5d8db;
}

.map-tools {
    position: absolute;
    top: 18px;
    right: 18px;
    display: flex;
    flex-direction: column;
    gap: 18px;
}

.map-tools button {
    display: flex;
    align-items: center;
    justify-content: center;
    width: 60px;
    height: 61px;
    padding-bottom: 2px;
    border-radius: 3px;
    background-color: #fff;
    box-shadow: 0 1px 4px #8d8fd0;
}

.map-tools svg {
    width: 24px;
    height: 24px;
}

.zoom {
    border-radius: 3px;
    box-shadow: 0 1px 4px #8d8fd0;
}

.zoom button {
    box-shadow: none;
}

.zoom button + button {
    border-top: 2px solid #e2e5e5;
}

/* Toast */
.toast {
    position: fixed;
    top: 31px;
    right: 70px;
    display: flex;
    align-items: flex-start;
    width: 832px;
    padding: 38px 49px 40px 38px;
    border-left: 7px solid #0a6e3f;
    border-radius: 3px;
    background-color: #fff;
    box-shadow: 0 2px 8px rgba(60, 50, 160, 0.25);
}

.toast .check {
    flex: none;
    width: 45px;
    height: 45px;
}

.toast p {
    flex: 1;
    padding: 0 20px 0 54px;
    font-size: 30px;
    line-height: 45px;
    font-weight: 600;
}

.toast button {
    display: flex;
    align-items: center;
    height: 45px;
}

.toast button svg {
    width: 22px;
    height: 22px;
}
```
